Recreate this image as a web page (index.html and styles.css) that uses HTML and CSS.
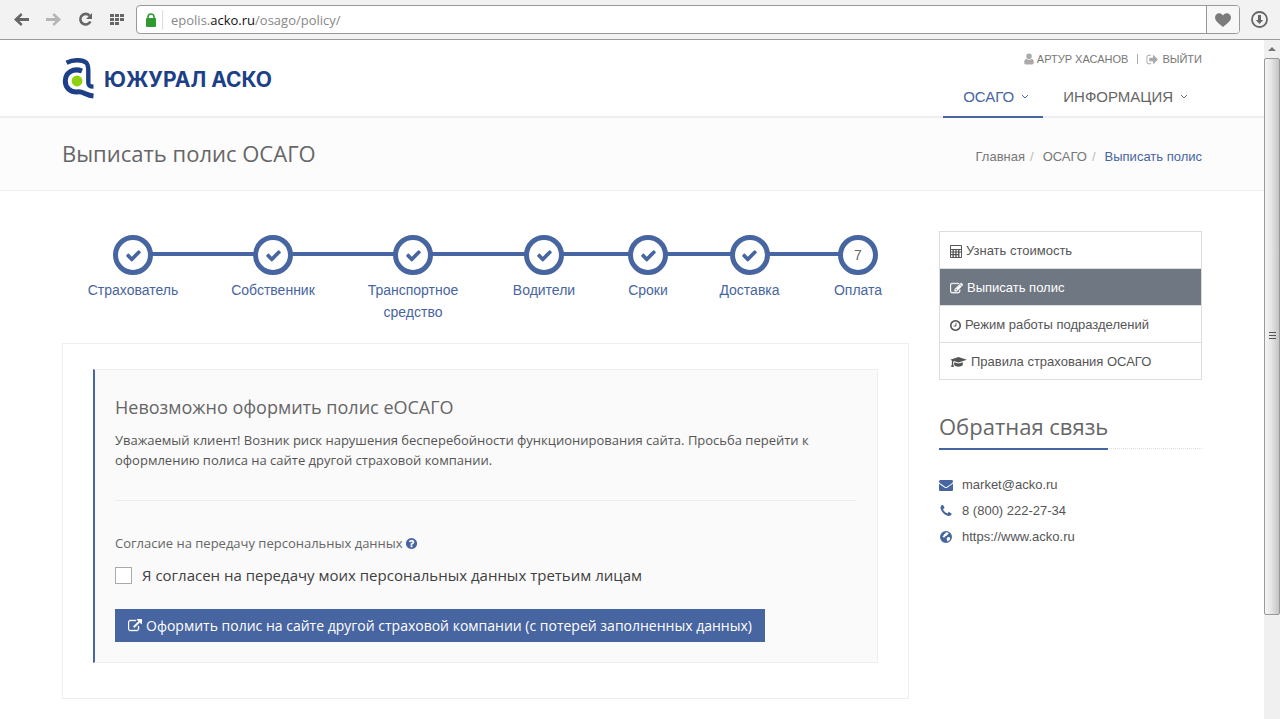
FILE: index.html
```html
<!DOCTYPE html>
<html lang="ru">
<head>
<meta charset="utf-8">
<title>Выписать полис ОСАГО</title>
<link rel="stylesheet" href="styles.css">
</head>
<body>
<svg class="sprite" aria-hidden="true">
  <symbol id="check" viewBox="0 0 1792 1792"><path d="M1671 566q0 40-28 68l-724 724-136 136q-28 28-68 28t-68-28l-136-136-362-362q-28-28-28-68t28-68l136-136q28-28 68-28t68 28l294 295 656-657q28-28 68-28t68 28l136 136q28 28 28 68z"/></symbol>
  <symbol id="envelope" viewBox="0 0 1792 1792"><path d="M1792 710v794q0 66-47 113t-113 47h-1472q-66 0-113-47t-47-113v-794q44 49 101 87 362 246 497 345 57 42 92.500 65.500t94.500 48 110 24.500h2q51 0 110-24.500t94.500-48 92.500-65.500q170-123 498-345 57-39 100-87zm0-294q0 79-49 151t-122 123q-376 261-468 325-10 7-42.500 31t-54 39-52 33.500-57.500 27.500-50 9h-2q-23 0-50-9t-57.500-27.500-52-33.500-54-39-42.500-31q-91-64-262-182.500t-205-142.500q-62-42-117-115.500t-55-136.500q0-78 41.500-130t118.500-52h1472q65 0 112.500 47t47.500 113z"/></symbol>
  <symbol id="phone" viewBox="0 0 1792 1792"><path d="M1600 1240q0 27-10 70.500t-21 68.500q-21 50-122 106-94 51-186 51-27 0-53-3.500t-57.500-12.500-47-14.500-55.500-20.500-49-18q-98-35-175-83-127-79-264-216t-216-264q-48-77-83-175-3-9-18-49t-20.500-55.500-14.500-47-12.500-57.500-3.500-53q0-92 51-186 56-101 106-122 25-11 68.500-21t70.500-10q14 0 21 3 18 6 53 76 11 19 30 54t35 63.500 31 53.500q3 4 17.500 25t21.500 35.500 7 28.500q0 20-28.500 50t-62 55-62 53-28.500 46q0 9 5 22.500t8.500 20.500 14 24 11.500 19q76 137 174 235t235 174q2 1 19 11.500t24 14 20.500 8.500 22.500 5q18 0 46-28.500t53-62 55-62 50-28.500q14 0 28.500 7t35.500 21.500 25 17.500q25 15 53.500 31t63.500 35 54 30q70 35 76 53 3 7 3 21z"/></symbol>
  <symbol id="globe" viewBox="0 0 14 14"><path fill-rule="evenodd" d="M7 1a6 6 0 1 1 0 12A6 6 0 0 1 7 1zM8 2.200 6.800 2.600 6 3.800 5 4.300 4.600 5.600 3.400 6.200 4.200 7.200 5.400 7.400 6.300 6.300 8 5.400 9.200 3.800 10 3.200zM8.600 7.200 7.600 8.400 8 9.800 8.400 11.600 10.200 10.600 11.300 9 11 7.600 9.800 6.900z"/></symbol>
  <symbol id="question" viewBox="0 0 1792 1792"><path d="M1024 1376v-192q0-14-9-23t-23-9h-192q-14 0-23 9t-9 23v192q0 14 9 23t23 9h192q14 0 23-9t9-23zm256-672q0-88-55.500-163t-138.500-116-170-41q-243 0-371 213-15 24 8 42l132 100q7 6 19 6 16 0 25-12 53-68 86-92 34-24 86-24 48 0 85.500 26t37.500 59q0 38-20 61t-68 45q-63 28-115.500 86.500t-52.500 125.500v36q0 14 9 23t23 9h192q14 0 23-9t9-23q0-19 21.500-49.500t54.500-49.500q32-18 49-28.500t46-35 44.500-48 28-60.500 12.500-81zm384 192q0 209-103 385.500t-279.500 279.500-385.500 103-385.500-103-279.500-279.500-103-385.500 103-385.500 279.500-279.500 385.500-103 385.500 103 279.500 279.500 103 385.500z"/></symbol>
  <symbol id="clock" viewBox="128 128 1536 1536"><path d="M1024 544v448q0 14-9 23t-23 9h-320q-14 0-23-9t-9-23v-64q0-14 9-23t23-9h224v-352q0-14 9-23t23-9h64q14 0 23 9t9 23zm416 352q0-148-73-273t-198-198-273-73-273 73-198 198-73 273 73 273 198 198 273 73 273-73 198-198 73-273zm224 0q0 209-103 385.500t-279.500 279.500-385.500 103-385.500-103-279.500-279.500-103-385.500 103-385.500 279.500-279.500 385.500-103 385.500 103 279.500 279.500 103 385.500z"/></symbol>
  <symbol id="edit" viewBox="0 0 1792 1792"><path d="M888 1184l116-116-152-152-116 116v56h96v96h56zm440-720q-16-16-33 1l-350 350q-17 17-1 33t33-1l350-350q17-17 1-33zm80 594v190q0 119-84.500 203.500t-203.500 84.500h-832q-119 0-203.500-84.500t-84.500-203.500v-832q0-119 84.500-203.500t203.500-84.500h832q63 0 117 25 15 7 18 23 3 17-9 29l-49 49q-14 14-32 8-23-6-45-6h-832q-66 0-113 47t-47 113v832q0 66 47 113t113 47h832q66 0 113-47t47-113v-126q0-13 9-22l64-64q15-15 35-7t20 29zm-96-738l288 288-672 672h-288v-288zm444 132l-92 92-288-288 92-92q28-28 68-28t68 28l152 152q28 28 28 68t-28 68z"/></symbol>
  <symbol id="external" viewBox="0 0 1792 1792"><path d="M1408 928v320q0 119-84.500 203.500t-203.500 84.500h-832q-119 0-203.500-84.500t-84.500-203.500v-832q0-119 84.500-203.500t203.500-84.500h704q14 0 23 9t9 23v64q0 14-9 23t-23 9h-704q-66 0-113 47t-47 113v832q0 66 47 113t113 47h832q66 0 113-47t47-113v-320q0-14 9-23t23-9h64q14 0 23 9t9 23zm384-864v512q0 26-19 45t-45 19-45-19l-176-176-652 652q-10 10-23 10t-23-10l-114-114q-10-10-10-23t10-23l652-652-176-176q-19-19-19-45t19-45 45-19h512q26 0 45 19t19 45z"/></symbol>
  <symbol id="signout" viewBox="0 0 1792 1792"><path d="M704 1440q0 4 1 20t.5 26.500-3 23.500-10 19.500-20.500 6.500h-320q-119 0-203.500-84.500t-84.500-203.500v-704q0-119 84.500-203.500t203.500-84.500h320q13 0 22.500 9.500t9.500 22.500q0 4 1 20t.5 26.500-3 23.500-10 19.500-20.500 6.500h-320q-66 0-113 47t-47 113v704q0 66 47 113t113 47h312l11.500 1 11.500 3 8 5.500 7 9 2 13.500zm928-544q0 26-19 45l-544 544q-19 19-45 19t-45-19-19-45v-288h-448q-26 0-45-19t-19-45v-384q0-26 19-45t45-19h448v-288q0-26 19-45t45-19 45 19l544 544q19 19 19 45z"/></symbol>
  <symbol id="user" viewBox="0 0 10 12"><path d="M5 0.500a2.800 2.800 0 0 1 2.800 2.800C7.800 5 6.500 6.400 5 6.400S2.200 5 2.200 3.300A2.800 2.800 0 0 1 5 .5zM2.300 5.700C3.900 7.500 6.100 7.500 7.700 5.700 9.200 5.900 9.800 7.600 9.800 9.600 9.800 10.900 9 11.500 8 11.500H2C1 11.500.2 10.900.2 9.600.2 7.600.8 5.900 2.300 5.700z"/></symbol>
  <symbol id="calc" viewBox="0 0 12 13"><path fill-rule="evenodd" d="M0 1q0-1 1-1h10q1 0 1 1v11q0 1-1 1H1q-1 0-1-1zM1 1v3h10V1zM1 5v1.500h1.500V5zm2.800 0v1.500h1.500V5zm2.800 0v1.500h1.500V5zm2.900 0v1.500H11V5zM1 7.500V9h1.500V7.500zm2.800 0V9h1.500V7.500zm2.800 0V9h1.500V7.500zM1 10.200V12h1.500v-1.800zm2.800 0V12h1.500v-1.800zm2.800 0V12h1.500v-1.800zM9.500 7.500V12H11V7.500z"/></symbol>
  <symbol id="cap" viewBox="0 0 17 12"><path d="M8.500 1 16.800 3.800 8.500 6.500 4 5.100 3.200 6v1.800L3.900 11H1.100L1.900 7.800V4.600L.2 3.800zM4.200 6.200 8.500 7.600 12.800 6.200V9C12 10.300 10.300 10.700 8.500 10.700S5 10.300 4.200 9z"/></symbol>
  <symbol id="chevron" viewBox="0 0 8 6"><path d="M1 1 4 4 7 1" fill="none" stroke="currentColor"/></symbol>
</svg>

<div class="toolbar">
  <button class="tool" aria-label="Назад"><svg width="15" height="13" viewBox="0 0 15 13"><path d="M7 0 0 6.500 7 13 8.500 11 5.500 8H15V5H5.500l3-3z" fill="#666"/></svg></button>
  <button class="tool" aria-label="Вперёд"><svg width="15" height="13" viewBox="0 0 15 13"><path d="M8 0 15 6.500 8 13 6.500 11 9.500 8H0V5h9.500l-3-3z" fill="#b5b5b5"/></svg></button>
  <button class="tool" aria-label="Обновить"><svg width="15" height="15" viewBox="0 0 15 15"><path d="M11.500 3.600A5.300 5.300 0 1 0 12.400 9.500" fill="none" stroke="#666" stroke-width="2.600"/><path d="M14 1v6H8z" fill="#666"/></svg></button>
  <button class="tool" aria-label="Экспресс-панель"><svg width="14" height="12" viewBox="0 0 14 12"><path d="M0 0h4v3H0zM5 0h4v3H5zM10 0h4v3h-4zM0 4h4v3H0zM5 4h4v3H5zM10 4h4v3h-4zM0 8h4v3H0zM5 8h4v3H5z" fill="#666"/></svg></button>
  <div class="address">
    <svg class="lock" width="10" height="14" viewBox="0 0 10 14"><path d="M2 6V4a3 3 0 0 1 6 0v2" fill="none" stroke="#2f9a32" stroke-width="1.600"/><rect y="5" width="10" height="9" rx="1" fill="#2f9a32"/></svg>
    <div class="url">epolis.<b>acko.ru</b>/osago/policy/</div>
    <button class="fav" aria-label="В закладки"><svg width="16" height="14" viewBox="0 0 16 14"><path d="M8 14C6 12 0 8.500 0 4.500 0 .3 5.500-1.500 8 2.500 10.500-1.500 16 .3 16 4.500 16 8.500 10 12 8 14z" fill="#7b7b7b"/></svg></button>
  </div>
  <button class="tool" aria-label="Загрузки"><svg width="17" height="17" viewBox="0 0 17 17"><circle cx="8.500" cy="8.500" r="7.500" fill="none" stroke="#666" stroke-width="1.800"/><path d="M7 4h3v5h2.200l-3.700 4-3.700-4H7z" fill="#666"/></svg></button>
</div>

<div class="view">
  <div class="page">
    <header class="header">
      <div class="container header-row">
        <a class="logo" href="#">
          <svg width="33" height="41" viewBox="0 0 33 41"><g fill="none" stroke="#1c3f88"><path d="M4.500 4.700C11 1.500 20 1.200 24.300 4.700 26.500 7 26.300 10 26.300 14V24.500C26.300 27.500 27.500 28.600 31.500 28.600" stroke-width="4.400"/><path d="M20 13C11 9.500 3.300 15 3.300 23c0 7 5.200 11 11.200 11C21 32.500 23 37.300 31.500 38" stroke-width="5"/></g><circle cx="15" cy="23" r="5.400" fill="#8fd00f"/></svg>
          <span>ЮЖУРАЛ АСКО</span>
        </a>
        <div class="header-side">
          <div class="account">
            <a href="#"><svg class="i-user"><use href="#user"/></svg>АРТУР ХАСАНОВ</a>
            <span class="sep"></span>
            <a href="#"><svg class="i-out"><use href="#signout"/></svg>ВЫЙТИ</a>
          </div>
          <nav class="nav">
            <a class="active" href="#">ОСАГО<svg><use href="#chevron"/></svg></a>
            <a href="#">ИНФОРМАЦИЯ<svg><use href="#chevron"/></svg></a>
          </nav>
        </div>
      </div>
    </header>

    <div class="titlebar">
      <div class="container title-row">
        <h1>Выписать полис ОСАГО</h1>
        <nav class="crumbs"><a href="#">Главная</a><i>/</i><a href="#">ОСАГО</a><i>/</i><a class="current" href="#">Выписать полис</a></nav>
      </div>
    </div>

    <div class="container content">
      <main>
        <ol class="steps">
          <li><span class="dot"><svg><use href="#check"/></svg></span>Страхователь</li>
          <li><span class="dot"><svg><use href="#check"/></svg></span>Собственник</li>
          <li><span class="dot"><svg><use href="#check"/></svg></span>Транспортное средство</li>
          <li><span class="dot"><svg><use href="#check"/></svg></span>Водители</li>
          <li><span class="dot"><svg><use href="#check"/></svg></span>Сроки</li>
          <li><span class="dot"><svg><use href="#check"/></svg></span>Доставка</li>
          <li><span class="dot">7</span>Оплата</li>
        </ol>
        <div class="box">
          <section class="notice">
            <h2>Невозможно оформить полис еОСАГО</h2>
            <p>Уважаемый клиент! Возник риск нарушения бесперебойности функционирования сайта. Просьба перейти к оформлению полиса на сайте другой страховой компании.</p>
            <hr>
            <div class="consent-title">Согласие на передачу персональных данных <svg><use href="#question"/></svg></div>
            <label class="consent"><input type="checkbox">Я согласен на передачу моих персональных данных третьим лицам</label>
            <button class="submit"><svg><use href="#external"/></svg>Оформить полис на сайте другой страховой компании (с потерей заполненных данных)</button>
          </section>
        </div>
      </main>
      <aside>
        <nav class="menu">
          <a href="#"><svg class="i-calc"><use href="#calc"/></svg>Узнать стоимость</a>
          <a class="active" href="#"><svg class="i-edit"><use href="#edit"/></svg>Выписать полис</a>
          <a href="#"><svg class="i-clock"><use href="#clock"/></svg>Режим работы подразделений</a>
          <a href="#"><svg class="i-cap"><use href="#cap"/></svg>Правила страхования ОСАГО</a>
        </nav>
        <div class="feedback"><h2>Обратная связь</h2></div>
        <ul class="contacts">
          <li><svg><use href="#envelope"/></svg><a href="#">market@acko.ru</a></li>
          <li><svg><use href="#phone"/></svg><a href="#">8 (800) 222-27-34</a></li>
          <li><svg><use href="#globe"/></svg><a href="#">https://www.acko.ru</a></li>
        </ul>
      </aside>
    </div>
  </div>
  <div class="scrollbar">
    <div class="arrow"></div>
    <div class="thumb"><span></span></div>
  </div>
</div>
</body>
</html>
```
FILE: styles.css
```css
* { box-sizing: border-box; }
body {
  margin: 0;
  min-height: 100vh;
  display: flex;
  flex-direction: column;
  background: #fff;
  color: #555;
  font: 13px/20px "Liberation Sans", Arial, sans-serif;
}
a { color: inherit; text-decoration: none; }
h1, h2, p, ol, ul { margin: 0; padding: 0; font-weight: 400; list-style: none; }
button { border: 0; padding: 0; background: none; font: inherit; color: inherit; }
svg { flex: none; fill: currentColor; }
.sprite { position: absolute; width: 0; height: 0; }

/* Browser toolbar */
.toolbar {
  display: flex;
  align-items: center;
  gap: 2px;
  height: 40px;
  padding: 0 6px;
  background: #f2f2f2;
  border-bottom: 1px solid #999;
}
.tool { width: 30px; height: 30px; display: flex; align-items: center; justify-content: center; }
.address {
  flex: 1;
  display: flex;
  align-items: center;
  height: 29px;
  margin: 0 2px;
  border: 1px solid #999;
  border-radius: 4px;
  background: #fff;
}
.lock { margin: 0 6px 0 9px; }
.url {
  flex: 1;
  padding-left: 8px;
  border-left: 1px solid #ddd;
  color: #888;
  font: 13px/20px "Open Sans", "Noto Sans", sans-serif;
}
.url b { color: #111; font-weight: 400; }
.fav {
  width: 33px;
  height: 27px;
  border-left: 1px solid #999;
  border-radius: 0 3px 3px 0;
  background: #f7f7f7;
  display: flex;
  align-items: center;
  justify-content: center;
}

.view { flex: 1; display: flex; }
.page { flex: 1; min-width: 0; }
.container { max-width: 1170px; margin: 0 auto; padding: 0 15px; }

/* Header */
.header { border-bottom: 2px solid #eee; }
.header-row { display: flex; justify-content: space-between; height: 76px; }
.logo { display: flex; align-items: center; gap: 9px; color: #1c3f88; font: 700 21px/24px Inter, "Open Sans", sans-serif; }
.logo span { padding-top: 4px; }
.header-side { display: flex; flex-direction: column; align-items: flex-end; justify-content: space-between; padding-top: 9px; }
.account { display: flex; align-items: center; font-size: 11px; color: #777; }
.account a { display: flex; align-items: center; gap: 3px; }
.account svg { color: #aaa; }
.i-user { width: 10px; height: 12px; }
.i-out { width: 13px; height: 13px; }
.sep { width: 1px; height: 10px; margin: 0 8px 0 9px; background: #aaa; }
.nav { display: flex; margin-bottom: -2px; font-size: 15px; color: #666; }
.nav a { display: flex; align-items: center; gap: 7px; padding: 10px 14px 7px 20px; border-bottom: 2px solid transparent; line-height: 24px; }
.nav .active { border-color: #4765a0; color: #4765a0; }
.nav svg { width: 8px; height: 6px; }

.titlebar { background: #fcfcfc; border-bottom: 1px solid #eee; }
.title-row { display: flex; align-items: center; justify-content: space-between; height: 72px; }
h1 { padding-bottom: 2px; font: 22px/30px "Open Sans", sans-serif; color: #666; }
.crumbs { padding-top: 6px; color: #777; }
.crumbs i { margin: 0 9px 0 5px; font-style: normal; color: #bbb; }
.crumbs .current { color: #4765a0; }

/* Content */
.content { display: grid; grid-template-columns: minmax(0, 847fr) minmax(0, 263fr); gap: 30px; padding-top: 40px; }
.steps {
  display: grid;
  grid-template-columns: 142fr 138fr 142fr 120fr 88fr 115fr 102fr;
  padding-top: 4px;
  color: #4765a0;
  font-size: 14px;
  line-height: 22px;
  text-align: center;
}
.steps li { position: relative; padding: 0 20px; }
.steps li::before {
  content: "";
  position: absolute;
  z-index: -1;
  top: 17px;
  left: 0;
  right: 0;
  height: 4px;
  background: #4765a0;
}
.steps li:first-child::before { left: 50%; }
.steps li:last-child::before { right: 50%; }
.dot {
  width: 40px;
  height: 40px;
  margin: 0 auto 4px;
  border: 5px solid #4765a0;
  border-radius: 50%;
  background: #fff;
  color: #666;
  display: flex;
  align-items: center;
  justify-content: center;
}
.dot svg { width: 17px; height: 17px; color: #4765a0; }
.box { margin-top: 20px; padding: 25px 30px 35px; border: 1px solid #eee; }
.notice {
  padding: 24px 21px 20px 20px;
  border: 1px solid #eee;
  border-left: 2px solid #4765a0;
  background: #fafafa;
  font-family: "Open Sans", sans-serif;
}
.notice h2 { font-size: 18px; line-height: 26px; color: #666; margin-bottom: 10px; }
.notice hr { margin: 30px 0 32px; border: 0; border-top: 1px solid #eee; }
.consent-title { display: flex; align-items: center; gap: 2px; color: #666; }
.consent-title svg { width: 13px; height: 13px; }
.consent-title svg, .contacts svg { color: #4765a0; }
.consent { display: flex; align-items: center; gap: 10px; margin-top: 10px; font-size: 15px; line-height: 24px; color: #404040; }
.consent input { appearance: none; width: 17px; height: 17px; margin: 0; border: 1px solid #aaa; background: #fff; }
.submit {
  display: flex;
  align-items: center;
  gap: 4px;
  margin-top: 22px;
  padding: 6px 13px;
  background: #4765a0;
  color: #fff;
  font-size: 14px;
  line-height: 21px;
}
.submit svg { width: 14px; height: 14px; }
.submit svg, .i-edit { stroke: currentColor; stroke-width: 50px; }

/* Sidebar */
.menu { border: 1px solid #ddd; }
.menu a { display: flex; align-items: center; gap: 4px; height: 37px; padding: 2px 10px 0; border-bottom: 1px solid #ddd; }
.menu a:last-child { height: 36px; border-bottom: 0; }
.menu .active { background: #6f7782; color: #fff; }
.i-calc { width: 12px; height: 13px; }
.i-edit { width: 13px; height: 13px; }
.i-clock { width: 11px; height: 11px; }
.i-cap { width: 17px; height: 12px; }
.feedback { margin-top: 31px; border-bottom: 1px dotted #ddd; }
.feedback h2 { display: inline-block; margin-bottom: -2px; padding-bottom: 7px; border-bottom: 2px solid #4765a0; font: 22px/30px "Open Sans", sans-serif; vertical-align: top; color: #666; }
.contacts { display: grid; gap: 6px; margin-top: 26px; }
.contacts li { display: flex; align-items: center; gap: 9px; }
.contacts svg { width: 14px; height: 14px; }

/* Scrollbar */
.scrollbar { width: 16px; display: flex; flex-direction: column; background: #f0f0f0; }
.arrow { height: 18px; display: flex; align-items: center; justify-content: center; }
.arrow::before { content: ""; border: 4px solid transparent; border-top: 0; border-bottom-color: #777; }
.thumb {
  flex: 0 1 82%;
  border: 1px solid #999;
  border-radius: 2px;
  background: linear-gradient(90deg, #f5f5f5, #e5e5e5 45%, #c4c4c4);
  display: flex;
  align-items: center;
  justify-content: center;
}
.thumb span { width: 7px; height: 8px; background: repeating-linear-gradient(#555 0 1px, transparent 1px 3px); }
```
